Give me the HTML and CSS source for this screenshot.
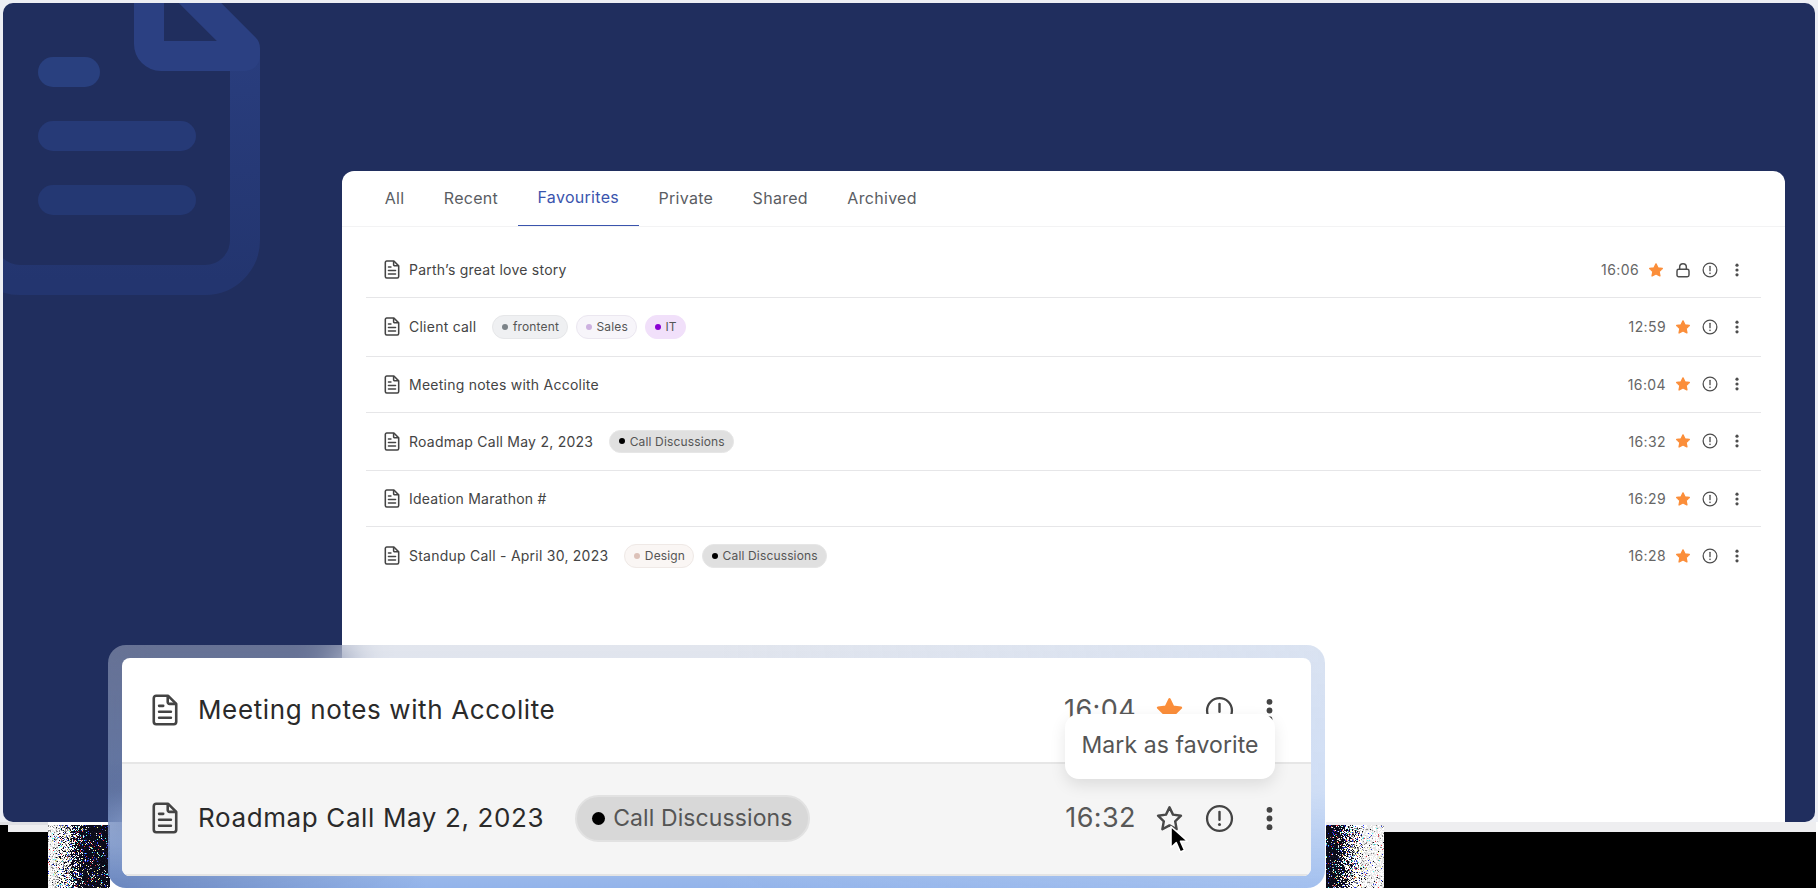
FILE: index.html
```html
<!DOCTYPE html>
<html lang="en">
<head>
<meta charset="utf-8">
<title>Favourites</title>
<link rel="stylesheet" href="styles.css">
</head>
<body>
<svg class="defs" aria-hidden="true">
  <symbol id="i-doc" viewBox="0 0 22 27">
    <path d="M3.5 1.5h10.2L20.5 8.300v15.200a2 2 0 0 1-2 2h-15a2 2 0 0 1-2-2v-20a2 2 0 0 1 2-2z" fill="none" stroke="currentColor" stroke-width="2.200" stroke-linejoin="round"/>
    <path d="M13.300 1.500v5.300a1.500 1.500 0 0 0 1.500 1.500h5.700" fill="none" stroke="currentColor" stroke-width="2.200"/>
    <path d="M6 10h3.500M6 15h10M6 20h10" fill="none" stroke="currentColor" stroke-width="2.200" stroke-linecap="round"/>
  </symbol>
  <symbol id="i-star" viewBox="0 0 24 24">
    <path d="M12 2.800l2.900 6 6.600.9-4.800 4.600 1.200 6.600L12 17.700l-5.900 3.200 1.200-6.600-4.800-4.600 6.600-.9z" stroke-width="2" stroke-linejoin="round"/>
  </symbol>
  <symbol id="i-info" viewBox="0 0 24 24">
    <circle cx="12" cy="12" r="10.300" fill="none" stroke="currentColor" stroke-width="1.900"/>
    <path d="M12 6.500v6.500" stroke="currentColor" stroke-width="2" stroke-linecap="round"/>
    <circle cx="12" cy="17" r="1.250" fill="currentColor"/>
  </symbol>
  <symbol id="i-lock" viewBox="0 0 24 24">
    <rect x="3" y="11" width="18" height="11" rx="2.500" fill="none" stroke="currentColor" stroke-width="2.200"/>
    <path d="M7 11V7.500a5 5 0 0 1 10 0V11" fill="none" stroke="currentColor" stroke-width="2.200"/>
  </symbol>
  <symbol id="i-dots" viewBox="0 0 24 24">
    <circle cx="12" cy="4.800" r="2.400" fill="currentColor"/>
    <circle cx="12" cy="12" r="2.400" fill="currentColor"/>
    <circle cx="12" cy="19.200" r="2.400" fill="currentColor"/>
  </symbol>
</svg>

<main class="stage">
  <div class="frame">
    <section class="panel">
      <svg class="watermark" viewBox="0 0 270 300" aria-hidden="true">
        <defs>
          <linearGradient id="wm" x1="0" y1="0" x2="0" y2="1">
            <stop offset="0" stop-color="#2b4082"/>
            <stop offset="1" stop-color="#23356f"/>
          </linearGradient>
        </defs>
        <path d="M245 48V240a40 40 0 0 1-40 40H20a40 40 0 0 1-40-40V-20" fill="none" stroke="url(#wm)" stroke-width="30"/>
        <path d="M149-20V44a12 12 0 0 0 12 12H245V48L188-9" fill="none" stroke="#2b4082" stroke-width="30" stroke-linejoin="round"/>
        <rect x="38" y="57" width="62" height="30" rx="15" fill="#29407f"/>
        <rect x="38" y="121" width="158" height="30" rx="15" fill="#263a77"/>
        <rect x="38" y="185" width="158" height="30" rx="15" fill="#243873"/>
      </svg>

      <div class="card">
        <nav class="tabs">
          <a class="tab">All</a>
          <a class="tab">Recent</a>
          <a class="tab tab-active">Favourites</a>
          <a class="tab">Private</a>
          <a class="tab">Shared</a>
          <a class="tab">Archived</a>
        </nav>
        <ul class="list">
          <li class="row">
            <svg class="doc"><use href="#i-doc"/></svg>
            <span class="title">Parth’s great love story</span>
            <span class="meta">
              <span class="time">16:06</span>
              <svg class="ico star-on"><use href="#i-star"/></svg>
              <svg class="ico"><use href="#i-lock"/></svg>
              <svg class="ico"><use href="#i-info"/></svg>
              <svg class="ico"><use href="#i-dots"/></svg>
            </span>
          </li>
          <li class="row">
            <svg class="doc"><use href="#i-doc"/></svg>
            <span class="title">Client call</span>
            <span class="chips">
              <span class="chip chip-grey"><i class="dot"></i>frontent</span>
              <span class="chip chip-lilac"><i class="dot"></i>Sales</span>
              <span class="chip chip-purple"><i class="dot"></i>IT</span>
            </span>
            <span class="meta">
              <span class="time">12:59</span>
              <svg class="ico star-on"><use href="#i-star"/></svg>
              <svg class="ico"><use href="#i-info"/></svg>
              <svg class="ico"><use href="#i-dots"/></svg>
            </span>
          </li>
          <li class="row">
            <svg class="doc"><use href="#i-doc"/></svg>
            <span class="title">Meeting notes with Accolite</span>
            <span class="meta">
              <span class="time">16:04</span>
              <svg class="ico star-on"><use href="#i-star"/></svg>
              <svg class="ico"><use href="#i-info"/></svg>
              <svg class="ico"><use href="#i-dots"/></svg>
            </span>
          </li>
          <li class="row">
            <svg class="doc"><use href="#i-doc"/></svg>
            <span class="title">Roadmap Call May 2, 2023</span>
            <span class="chips">
              <span class="chip chip-black"><i class="dot"></i>Call Discussions</span>
            </span>
            <span class="meta">
              <span class="time">16:32</span>
              <svg class="ico star-on"><use href="#i-star"/></svg>
              <svg class="ico"><use href="#i-info"/></svg>
              <svg class="ico"><use href="#i-dots"/></svg>
            </span>
          </li>
          <li class="row">
            <svg class="doc"><use href="#i-doc"/></svg>
            <span class="title">Ideation Marathon #</span>
            <span class="meta">
              <span class="time">16:29</span>
              <svg class="ico star-on"><use href="#i-star"/></svg>
              <svg class="ico"><use href="#i-info"/></svg>
              <svg class="ico"><use href="#i-dots"/></svg>
            </span>
          </li>
          <li class="row row-last">
            <svg class="doc"><use href="#i-doc"/></svg>
            <span class="title">Standup Call - April 30, 2023</span>
            <span class="chips">
              <span class="chip chip-sand"><i class="dot"></i>Design</span>
              <span class="chip chip-black"><i class="dot"></i>Call Discussions</span>
            </span>
            <span class="meta">
              <span class="time">16:28</span>
              <svg class="ico star-on"><use href="#i-star"/></svg>
              <svg class="ico"><use href="#i-info"/></svg>
              <svg class="ico"><use href="#i-dots"/></svg>
            </span>
          </li>
        </ul>
      </div>
    </section>
  </div>

  <footer class="tail">
    <div class="tail-left"><div class="tail-strip"></div></div>
    <canvas class="noise" id="noise-left" width="62" height="63"></canvas>
    <div class="tail-mid"></div>
    <canvas class="noise noise-right" id="noise-right" width="58" height="63"></canvas>
    <div class="tail-right"></div>
  </footer>

  <aside class="zoom">
    <div class="zoom-inner">
      <div class="zrow">
        <svg class="zdoc"><use href="#i-doc"/></svg>
        <span class="ztitle">Meeting notes with Accolite</span>
        <span class="zmeta">
          <span class="ztime">16:04</span>
          <svg class="zico star-on"><use href="#i-star"/></svg>
          <svg class="zico"><use href="#i-info"/></svg>
          <svg class="zico"><use href="#i-dots"/></svg>
        </span>
      </div>
      <div class="zrow zrow-hover">
        <svg class="zdoc"><use href="#i-doc"/></svg>
        <span class="ztitle">Roadmap Call May 2, 2023</span>
        <span class="zchip"><i class="zdot"></i>Call Discussions</span>
        <span class="zmeta">
          <span class="ztime">16:32</span>
          <svg class="zico star-off"><use href="#i-star"/></svg>
          <svg class="zico"><use href="#i-info"/></svg>
          <svg class="zico"><use href="#i-dots"/></svg>
        </span>
      </div>
      <div class="tooltip">Mark as favorite</div>
      <svg class="cursor" viewBox="0 0 20 30" aria-hidden="true">
        <path d="M2 1.500V22.500l5.300-4.800 4 9.300 4.200-1.800-4-9h7z" fill="#000" stroke="#fff" stroke-width="1.600" stroke-linejoin="round"/>
      </svg>
    </div>
  </aside>
</main>
<script src="noise.js"></script>
</body>
</html>
```

FILE: styles.css
```css
* { box-sizing: border-box; }

html, body {
  margin: 0;
  padding: 0;
  height: 100%;
  background: #fff;
  overflow: hidden;
}

body {
  font-family: Inter, "Liberation Sans", sans-serif;
}

.defs {
  display: none;
}

.stage {
  position: relative;
  width: 1818px;
  height: 888px;
  overflow: hidden;
  display: flex;
  flex-direction: column;
}

.frame {
  padding: 3px 3px 0;
  background: #eceef4;
  height: 822px;
  flex: none;
}

.panel {
  position: relative;
  height: 819px;
  padding: 168px 30px 0 339px;
  background: #202e5e;
  border-radius: 10px;
  overflow: hidden;
  display: flex;
}

.watermark {
  position: absolute;
  left: -3px;
  top: -3px;
  width: 270px;
  height: 300px;
}

.card {
  position: relative;
  flex: 1;
  background: #fff;
  border-radius: 12px 12px 0 0;
}

.tabs {
  display: flex;
  height: 56px;
  padding-left: 23px;
  border-bottom: 1px solid #f3f3f4;
}

.tab {
  height: 55px;
  padding: 0 19.7px 2px;
  display: flex;
  align-items: center;
  font-size: 16px;
  letter-spacing: .3px;
  color: #5a5d63;
}

.tab-active {
  color: #3a54ad;
  border-bottom: 1px solid #3a54ad;
}

.list {
  list-style: none;
  margin: 0 24px;
  padding: 15px 0 0;
}

.row {
  display: flex;
  align-items: center;
  padding: 17px 16px 17px 18px;
  border-bottom: 1px solid #e6e6e8;
}

.row-last {
  border-bottom: 0;
}

.doc {
  width: 16px;
  height: 19px;
  color: #444;
  flex: none;
}

.title {
  margin-left: 9px;
  font-size: 14px;
  line-height: 21px;
  letter-spacing: .24px;
  color: #444;
}

.chips {
  display: flex;
  gap: 8px;
  margin-left: 16px;
}

.chip {
  height: 23.5px;
  padding: 0 8px 0 9px;
  display: flex;
  align-items: center;
  gap: 4.5px;
  border: 1px solid transparent;
  border-radius: 12px;
  font-size: 12px;
  letter-spacing: .15px;
  color: #555;
}

.dot {
  width: 6px;
  height: 6px;
  border-radius: 50%;
  flex: none;
}

.chip-grey { background: #eff0f2; border-color: #e6e7e9; }
.chip-grey .dot { background: #7c8388; }
.chip-lilac { background: #f7f5fa; border-color: #ebe7f0; }
.chip-lilac .dot { background: #cdb1e0; }
.chip-purple { background: #f1e0fa; border-color: #f1e0fa; }
.chip-purple .dot { background: #8a00d4; }
.chip-black { background: #e0e0e0; border-color: #e6e6e6; }
.chip-black .dot { background: #000; }
.chip-sand { background: #faf6f4; border-color: #efe9e6; }
.chip-sand .dot { background: #dcc1b8; }

.meta {
  margin-left: auto;
  display: flex;
  align-items: center;
  gap: 11px;
}

.time {
  margin-right: -2px;
  font-size: 14px;
  line-height: 21px;
  letter-spacing: .4px;
  color: #666;
}

.ico {
  width: 16px;
  height: 16px;
  color: #4d4d4d;
  flex: none;
}

.star-on {
  fill: #fb8e3a;
  stroke: #fb8e3a;
}

.star-off {
  fill: none;
  stroke: #484848;
}

.tail {
  display: flex;
  height: 66px;
  flex: none;
  margin-right: 2px;
}

.tail-left {
  width: 48px;
  flex: none;
  background: #000;
  border-top: 3px solid #dfe0e4;
}

.tail-strip {
  height: 7px;
  margin-left: 8px;
  background: #eeeef0;
}

.noise {
  display: block;
  margin-top: 3px;
  flex: none;
}

.noise-right {
  box-shadow: 0 -3px 0 #eeeef0;
}

.tail-mid {
  flex: 1;
  background: #fff;
}

.tail-right {
  width: 432px;
  flex: none;
  background: #000;
  border-top: 10px solid #eeeef0;
}

.zoom {
  position: absolute;
  left: 108px;
  top: 645px;
  width: 1217px;
  height: 243px;
  padding: 13px 14px 12px 14px;
  border-radius: 18px;
  background:
    radial-gradient(ellipse 320px 130px at 0 100%, rgba(40, 60, 120, .38), rgba(40, 60, 120, 0)),
    linear-gradient(90deg, rgba(200, 220, 250, 0) 50%, rgba(200, 220, 250, .3) 100%),
    linear-gradient(180deg, rgba(190, 198, 216, .45) 0%, rgba(165, 190, 232, .5) 60%, rgba(137, 173, 232, .92) 100%);
  -webkit-backdrop-filter: blur(22px);
  backdrop-filter: blur(22px);
}

.zoom-inner {
  position: relative;
  height: 100%;
  background: #fff;
  border-radius: 8px;
  overflow: hidden;
  display: flex;
  flex-direction: column;
}

.zrow {
  height: 106px;
  padding: 0 27px 0 30px;
  display: flex;
  align-items: center;
  border-bottom: 2px solid #e6e6e6;
  flex: none;
}

.zrow-hover {
  flex: 1;
  height: auto;
  padding-bottom: 2px;
  background: #f5f5f5;
  border-bottom: 2px solid #e4e4e4;
}

.zdoc {
  width: 26px;
  height: 32px;
  color: #444;
  flex: none;
}

.ztitle {
  margin-left: 20px;
  font-size: 26px;
  line-height: 36px;
  letter-spacing: .62px;
  color: #2a2a2a;
}

.zchip {
  margin-left: 31px;
  height: 47px;
  padding: 0 15px;
  display: flex;
  align-items: center;
  gap: 8px;
  background: #d8d8d8;
  border: 2px solid #e2e2e2;
  border-radius: 24px;
  font-size: 23px;
  letter-spacing: .1px;
  color: #555;
}

.zdot {
  width: 13px;
  height: 13px;
  border-radius: 50%;
  background: #000;
  flex: none;
}

.zmeta {
  margin-left: auto;
  display: flex;
  align-items: center;
  gap: 21px;
}

.ztime {
  margin-right: -2px;
  font-size: 27px;
  line-height: 36px;
  letter-spacing: .4px;
  color: #585858;
}

.zico {
  width: 29px;
  height: 29px;
  color: #444;
  flex: none;
}

.tooltip {
  position: absolute;
  left: 943px;
  top: 56px;
  width: 210px;
  height: 65px;
  padding-bottom: 3px;
  display: flex;
  align-items: center;
  justify-content: center;
  background: #fff;
  border-radius: 14px;
  box-shadow: 0 6px 16px rgba(0, 0, 0, .1);
  font-size: 23px;
  letter-spacing: .1px;
  color: #555;
}

.cursor {
  position: absolute;
  left: 1047px;
  top: 167px;
  width: 20px;
  height: 30px;
}
```

FILE: noise.js
```js
(function () {
  var palette = ['#ffffff', '#ffff88', '#2233dd', '#3344ff', '#55ffff', '#cccccc', '#999999', '#ee3344'];
  var seed = 1337;
  function rnd() {
    seed = (seed * 16807) % 2147483647;
    return seed / 2147483647;
  }
  function paint(id, darkOnRight) {
    var c = document.getElementById(id);
    var g = c.getContext('2d');
    var w = c.width, h = c.height;
    g.fillStyle = '#fff';
    g.fillRect(0, 0, w, h);
    for (var y = 0; y < h; y++) {
      for (var x = 0; x < w; x++) {
        var t = darkOnRight ? (x - 2) / 38 : (w - x - 16) / 38;
        t = Math.max(0, Math.min(1, t));
        var v = rnd();
        var col;
        if (v > t + 0.12) {
          col = t < 0.2 && rnd() < 0.5 ? '#e8e8e8' : '#ffffff';
        } else if (rnd() < 0.62 * t + 0.1) {
          col = '#0a0a18';
        } else if (rnd() < 0.55) {
          col = t > 0.55 ? '#14142a' : '#8a8a8a';
        } else {
          col = palette[Math.floor(rnd() * palette.length)];
        }
        g.fillStyle = col;
        g.fillRect(x, y, 1, 1);
      }
    }
  }
  paint('noise-left', true);
  paint('noise-right', false);
})();
```
